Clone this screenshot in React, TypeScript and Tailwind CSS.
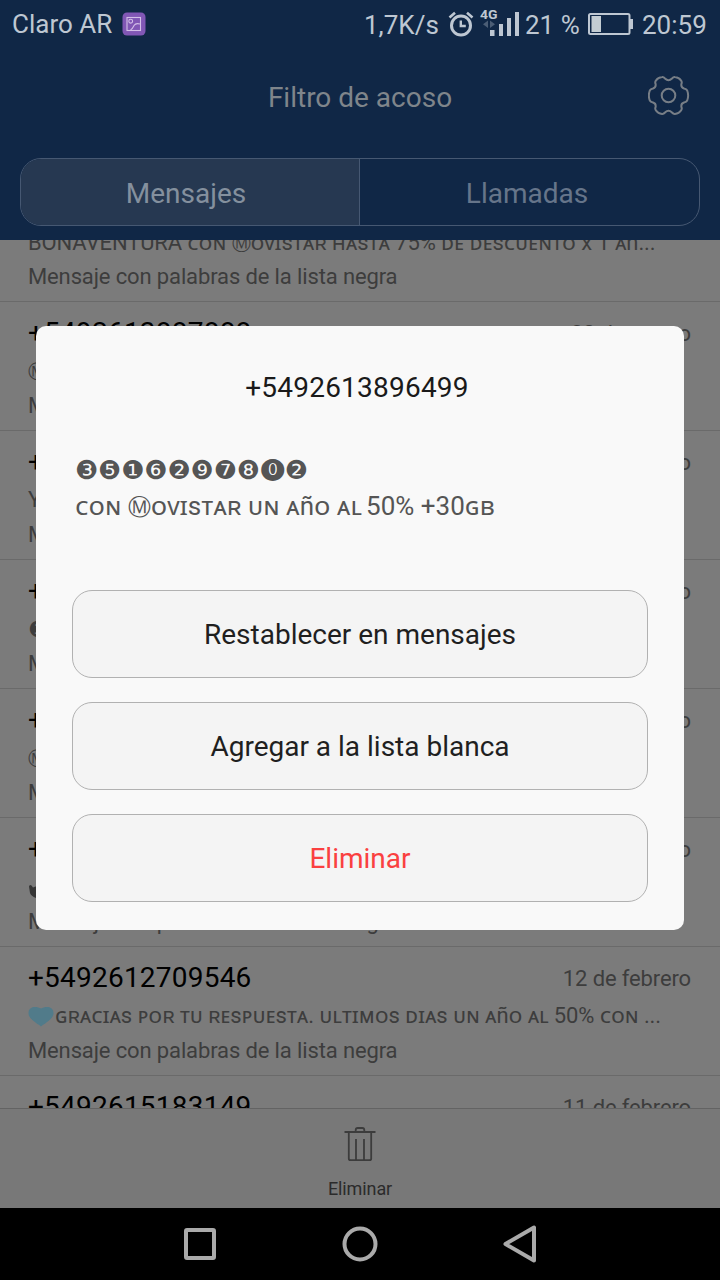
import React from "react";

type Message = { number: string; date: string; text: React.ReactNode };

const REASON = "Mensaje con palabras de la lista negra";

function CircledM() {
  return <span className="font-['DejaVu_Sans',sans-serif] text-[0.87em] leading-none">Ⓜ</span>;
}

function Heart() {
  return (
    <svg viewBox="0 0 26 22" preserveAspectRatio="none" className="mr-[1px] h-[21px] w-[26px] shrink-0" fill="#517b8a">
      <path d="M13 21.500C10 18.500 0.500 14 0.500 7.500 0.500 3.500 2.900 1 6.500 1c2.900 0 5.300 0.600 6.500 1.600C14.200 1.600 16.600 1 19.500 1c3.600 0 6 2.500 6 6.500C25.500 14 16 18.500 13 21.500z" />
    </svg>
  );
}

function Hand() {
  return (
    <svg viewBox="0 0 24 16" className="mt-[7px] h-4 w-6 shrink-0" fill="#363636">
      <path d="M1 3.500Q1.500 1 3.500 2.500L5 4.500 7.500 3.500 20 2V15H8Q3 13 2 10z" />
    </svg>
  );
}

const messages: Message[] = [
  {
    number: "+5492613450011",
    date: "21 de marzo",
    text: <span className="pt-px">BONAVENTURA ᴄᴏɴ <CircledM />ᴏᴠɪsᴛᴀʀ ʜᴀsᴛᴀ 75% ᴅᴇ ᴅᴇsᴄᴜᴇɴᴛᴏ x 1 ᴀñ...</span>,
  },
  { number: "+5492613887888", date: "20 de marzo", text: <span><CircledM />ᴏᴠɪsᴛᴀʀ</span> },
  { number: "+5492613896499", date: "18 de marzo", text: <span>Ya</span> },
  { number: "+5492613896499", date: "16 de marzo", text: <span className="pt-[2px] font-['DejaVu_Sans',sans-serif]">❸❺❶</span> },
  { number: "+5492613896499", date: "15 de febrero", text: <span><CircledM />ᴏᴠɪsᴛᴀʀ</span> },
  { number: "+5492613896499", date: "13 de febrero", text: <Hand /> },
  {
    number: "+5492612709546",
    date: "12 de febrero",
    text: <><Heart /><span>ɢʀᴀᴄɪᴀs ᴘᴏʀ ᴛᴜ ʀᴇsᴘᴜᴇsᴛᴀ. ᴜʟᴛɪᴍᴏs ᴅɪᴀs ᴜɴ ᴀñᴏ ᴀʟ 50% ᴄᴏɴ ...</span></>,
  },
  { number: "+5492615183149", date: "11 de febrero", text: <span>ᴄᴏɴ</span> },
];

function StatusBar() {
  return (
    <div className="flex h-12 items-center justify-between pl-3 pr-[13px] text-[26px] leading-none text-[#bec7d2]">
      <div className="flex items-center">
        <span className="w-[110px] whitespace-nowrap">Claro AR</span>
        <svg viewBox="0 0 24 24" className="h-6 w-6 shrink-0" fill="none">
          <rect x="0.500" y="0.500" width="23" height="23" rx="4.500" fill="#8157b5" />
          <g stroke="#d3bfe8" strokeWidth="1.100">
            <rect x="5" y="5.500" width="13.500" height="13" />
            <circle cx="8.700" cy="9.200" r="1.900" />
            <path d="M8.500 18c2-1 2.500-2.500 3.500-4.500 1-1.700 3-2.300 6-1.500" />
          </g>
        </svg>
      </div>
      <div className="flex items-center">
        <span className="-ml-px w-[85px] whitespace-nowrap pt-[2px]">1,7K/s</span>
        <svg viewBox="0 0 26 26" className="-ml-px h-[26px] w-[26px] shrink-0" fill="none" stroke="#bec7d2">
          <circle cx="13" cy="14.500" r="9.500" strokeWidth="3" />
          <path d="M1.500 6.500 7 1.800M24.500 6.500 19 1.800" strokeWidth="2.600" />
          <path d="M12.800 9.500v5.500h5" strokeWidth="2.400" />
        </svg>
        <svg viewBox="0 0 40 32" className="ml-[6px] h-8 w-10 shrink-0" fill="#bec7d2">
          <text x="0" y="17" fontSize="13" fontWeight="700" textLength="17.500" lengthAdjust="spacingAndGlyphs" transform="translate(0 1) scale(1 1)" dy="-7">4G</text>
          <path d="M8 12.500v7.500l-5-3.700zM10 12.500v7.500l5-3.700z" fill="#4b5d75" />
          <rect x="10" y="22" width="4.500" height="6" />
          <rect x="19" y="16" width="4" height="12" />
          <rect x="27" y="10" width="4" height="18" />
          <rect x="35" y="4" width="4" height="24" />
        </svg>
        <span className="ml-[5px] w-[63px] whitespace-nowrap pt-[2px]">21 %</span>
        <svg viewBox="0 0 45 22" className="h-[22px] w-[45px] shrink-0">
          <rect x="1" y="1" width="40.500" height="20" rx="1.500" fill="none" stroke="#bec7d2" strokeWidth="2" />
          <rect x="3.500" y="3" width="9.500" height="16" fill="#c3ccd2" />
          <rect x="42" y="6" width="3" height="10" fill="#bec7d2" />
        </svg>
        <span className="ml-[9px] w-[65px] whitespace-nowrap pt-[2px]">20:59</span>
      </div>
    </div>
  );
}

function Header() {
  return (
    <header className="flex h-60 shrink-0 flex-col bg-[#102746]">
      <StatusBar />
      <div className="grid h-[110px] grid-cols-[72px_1fr_72px] items-start pt-[27px]">
        <h1 className="col-start-2 pt-[7px] text-center text-[28px] leading-8 text-[#7f858b]">Filtro de acoso</h1>
        <svg viewBox="-20.500 -20.500 42 42" className="h-[42px] w-[42px]" fill="none" stroke="#777e86" strokeWidth="2">
          <circle r="6.800" />
          <path
            strokeLinejoin="round"
            d="M18.700-5Q20.600 0 18.700 5Q18 6.500 15.500 7Q12.300 8 12.900 11.500Q13.800 13.500 12.500 15Q10.500 18 6.500 18.400Q5 18.700 3.500 17Q0 13.500-3.500 17Q-5 18.700-6.500 18.400Q-10.500 18-12.500 15Q-13.800 13.500-12.900 11.500Q-12.300 8-15.500 7Q-18 6.500-18.700 5Q-20.600 0-18.700-5Q-18-6.500-15.500-7Q-12.300-8-12.900-11.500Q-13.800-13.500-12.500-15Q-10.500-18-6.500-18.400Q-5-18.700-3.500-17Q0-13.500 3.500-17Q5-18.700 6.500-18.400Q10.500-18 12.500-15Q13.800-13.500 12.900-11.500Q12.300-8 15.500-7Q18-6.500 18.700-5z"
          />
        </svg>
      </div>
      <div className="mx-5 grid h-[68px] grid-cols-2 overflow-hidden rounded-[21px] border border-[#465872] text-[28px] text-[#66758a]">
        <div className="flex items-center justify-center border-r border-[#465872] bg-[#263851] pt-[4px] pr-[8px] text-[#84909e]">Mensajes</div>
        <div className="flex items-center justify-center pt-[4px] pr-[5px]">Llamadas</div>
      </div>
    </header>
  );
}

function MessageRow({ message }: { message: Message }) {
  return (
    <li className="flex h-[129px] shrink-0 flex-col border-b border-[#6a6a6a] pl-7 pr-[29px] pt-[10px] whitespace-nowrap text-[22px] tracking-[-0.13px] text-[#3d3d3d]">
      <div className="flex h-[42px] items-center justify-between">
        <span className="text-[28px] tracking-[0.22px] text-black">{message.number}</span>
        <span>{message.date}</span>
      </div>
      <div className="flex h-[34px] items-center leading-[34px]">{message.text}</div>
      <div className="h-9 leading-9">{REASON}</div>
    </li>
  );
}

function Dialog() {
  const button = "flex h-[88px] items-center justify-center rounded-[20px] border border-[#b1b1b1] bg-[#f4f4f4] pt-[2px] text-[28px]";
  return (
    <div role="dialog" className="absolute left-9 top-[326px] flex h-[604px] w-[648px] flex-col rounded-[10px] bg-[#f9f9f9] px-9 pt-[41px]">
      <h2 className="pr-[6px] text-center text-[28px] leading-[42px] tracking-[0.22px] text-[#1a1a1a]">+5492613896499</h2>
      <div className="mt-[43px] h-[138px] whitespace-nowrap pl-1 text-[26px] leading-9 text-[#555]">
        <p className="-ml-px h-9 font-['DejaVu_Sans',sans-serif] tracking-[-0.2px]">
          ❸❺❶❻❷❾❼❽<span className="relative -top-1 mx-px text-[23px] leading-none">⓿</span>❷
        </p>
        <p className="-ml-px h-9 tracking-[-0.05px]">ᴄᴏɴ <CircledM />ᴏᴠɪsᴛᴀʀ ᴜɴ ᴀñᴏ ᴀʟ <span className="-ml-[2px] tracking-normal">50% +30ɢʙ</span></p>
      </div>
      <div className="flex flex-col gap-6 text-[#1f1f1f]">
        <button className={button}>Restablecer en mensajes</button>
        <button className={button}>Agregar a la lista blanca</button>
        <button className={`${button} text-[#fa4040]`}>Eliminar</button>
      </div>
    </div>
  );
}

export default function App() {
  return (
    <div className="relative flex h-[1280px] w-[720px] flex-col overflow-hidden bg-[#7b7b7b] font-['Roboto','Noto_Sans','DejaVu_Sans',sans-serif]">
      <Header />
      <ul className="-mt-[67px] flex h-[935px] shrink-0 flex-col overflow-hidden [clip-path:inset(67px_0_0_0)]">
        {messages.map((message, i) => <MessageRow key={i} message={message} />)}
      </ul>
      <div className="flex h-[100px] shrink-0 flex-col items-center border-t border-[#636363] bg-[#787878] pt-[17px] text-[#2b2b2b]">
        <svg viewBox="0 0 32 36" className="h-9 w-8" fill="none" stroke="#3c3c3c" strokeWidth="1.800">
          <path d="M0.500 6h31M4.800 6v26.500q0 1.700 1.700 1.700h19q1.700 0 1.700-1.700V6M11.700 5.500V4q0-2 2-2h4.600q2 0 2 2v1.500M12 13v21M20 13v21" />
        </svg>
        <span className="mt-[15px] text-[18px] leading-6 tracking-[-0.1px]">Eliminar</span>
      </div>
      <nav className="flex h-[72px] shrink-0 items-center justify-between bg-black px-[180px]">
        <svg viewBox="0 0 40 40" className="h-10 w-10" fill="none" stroke="#aaaaaa" strokeWidth="4"><rect x="6" y="6" width="28" height="28" rx="1" /></svg>
        <svg viewBox="0 0 40 40" className="h-10 w-10" fill="none" stroke="#aaaaaa" strokeWidth="4"><circle cx="20" cy="20" r="15.500" /></svg>
        <svg viewBox="0 0 40 40" className="h-10 w-10" fill="none" stroke="#aaaaaa" strokeWidth="4" strokeLinejoin="round"><path d="M34 3.500v33L5.500 20z" /></svg>
      </nav>
      <Dialog />
    </div>
  );
}
